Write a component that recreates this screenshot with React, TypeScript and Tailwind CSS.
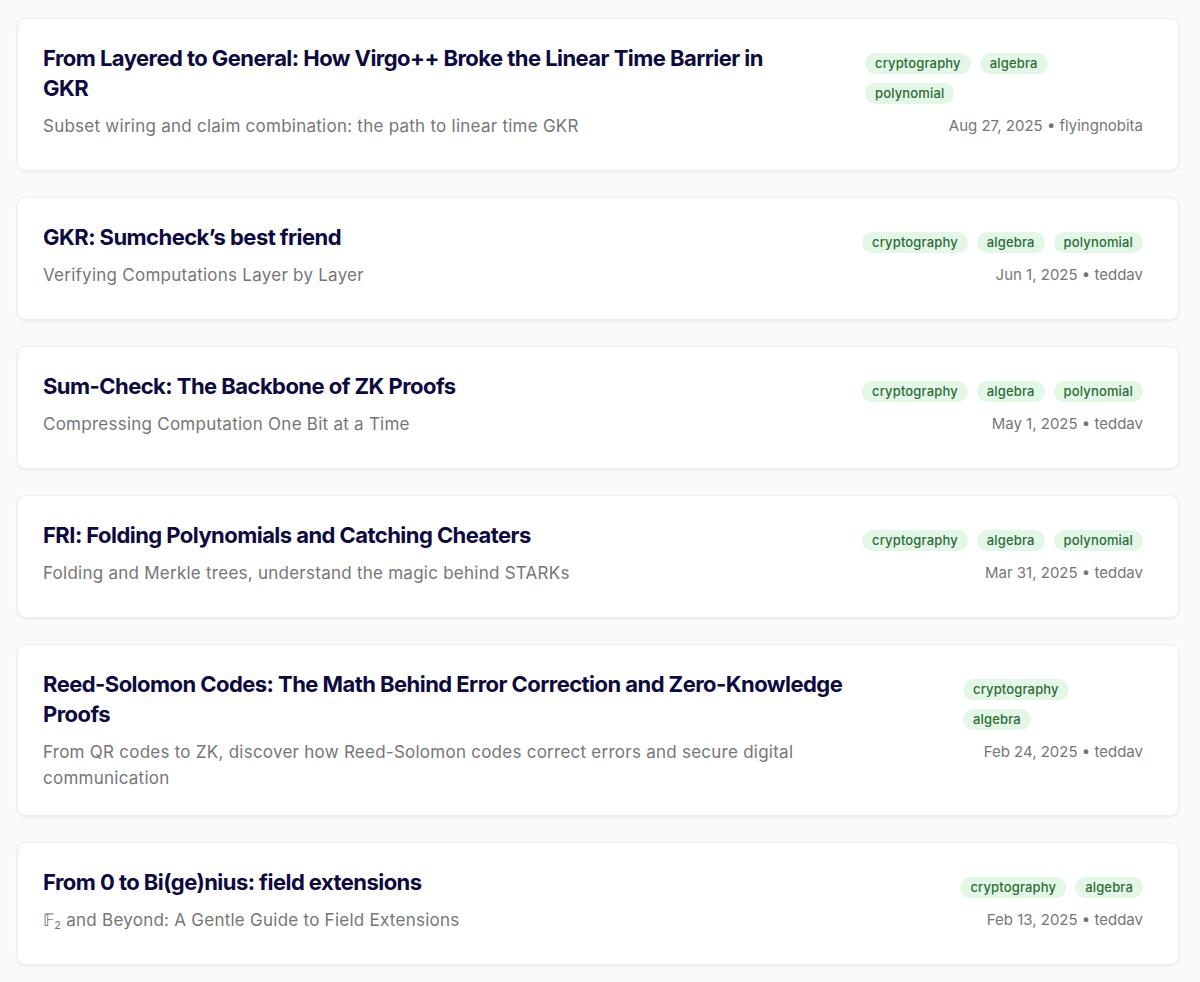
import React from "react";

type Post = {
  title: string;
  subtitle: React.ReactNode;
  tags: string[];
  date: string;
  author: string;
  side: string;
};

const posts: Post[] = [
  {
    title: "From Layered to General: How Virgo++ Broke the Linear Time Barrier in GKR",
    subtitle: "Subset wiring and claim combination: the path to linear time GKR",
    tags: ["cryptography", "algebra", "polynomial"],
    date: "Aug 27, 2025",
    author: "flyingnobita",
    side: "w-[298px]",
  },
  {
    title: "GKR: Sumcheck\u2019s best friend",
    subtitle: "Verifying Computations Layer by Layer",
    tags: ["cryptography", "algebra", "polynomial"],
    date: "Jun 1, 2025",
    author: "teddav",
    side: "shrink-0",
  },
  {
    title: "Sum-Check: The Backbone of ZK Proofs",
    subtitle: "Compressing Computation One Bit at a Time",
    tags: ["cryptography", "algebra", "polynomial"],
    date: "May 1, 2025",
    author: "teddav",
    side: "shrink-0",
  },
  {
    title: "FRI: Folding Polynomials and Catching Cheaters",
    subtitle: "Folding and Merkle trees, understand the magic behind STARKs",
    tags: ["cryptography", "algebra", "polynomial"],
    date: "Mar 31, 2025",
    author: "teddav",
    side: "shrink-0",
  },
  {
    title: "Reed-Solomon Codes: The Math Behind Error Correction and Zero-Knowledge Proofs",
    subtitle:
      "From QR codes to ZK, discover how Reed-Solomon codes correct errors and secure digital communication",
    tags: ["cryptography", "algebra"],
    date: "Feb 24, 2025",
    author: "teddav",
    side: "w-[200px]",
  },
  {
    title: "From 0 to Bi(ge)nius: field extensions",
    subtitle: (
      <>
        𝔽<sub className="text-[11px]">2</sub> and Beyond: A Gentle Guide to Field Extensions
      </>
    ),
    tags: ["cryptography", "algebra"],
    date: "Feb 13, 2025",
    author: "teddav",
    side: "shrink-0",
  },
];

function PostCard({ post }: { post: Post }) {
  return (
    <div className="flex gap-16 rounded-[9px] border border-[#efefef] bg-white px-[25px] py-6 shadow-[0_1px_3px_rgba(0,0,0,0.08)]">
      <div className="min-w-0 flex-1">
        <h2 className="text-[22px] font-bold leading-[30px] tracking-[-0.55px] text-[#0c0a3e]">
          {post.title}
        </h2>
        <p className="mt-2.5 text-[17px] leading-[26px] tracking-[0.25px] text-[#767676]">
          {post.subtitle}
        </p>
      </div>
      <div className={`${post.side} flex flex-col gap-3 p-2.5`}>
        <div className="flex flex-wrap gap-[9px]">
          {post.tags.map((t) => (
            <span
              key={t}
              className="rounded-full bg-[#e3f7e6] px-2.5 text-[13px] font-medium leading-[21px] tracking-[0.15px] text-[#2f6b3a]"
            >
              {t}
            </span>
          ))}
        </div>
        <div className="whitespace-nowrap text-right text-[15px] leading-5 text-[#767676]">
          {post.date} • {post.author}
        </div>
      </div>
    </div>
  );
}

export default function App() {
  return (
    <div className="min-h-screen bg-[#fafafa] pb-[18px] pl-[17px] pr-[21px] pt-[18px] font-['Inter',sans-serif]">
      <div className="flex flex-col gap-[26px]">
        {posts.map((p, i) => (
          <PostCard key={i} post={p} />
        ))}
      </div>
    </div>
  );
}
